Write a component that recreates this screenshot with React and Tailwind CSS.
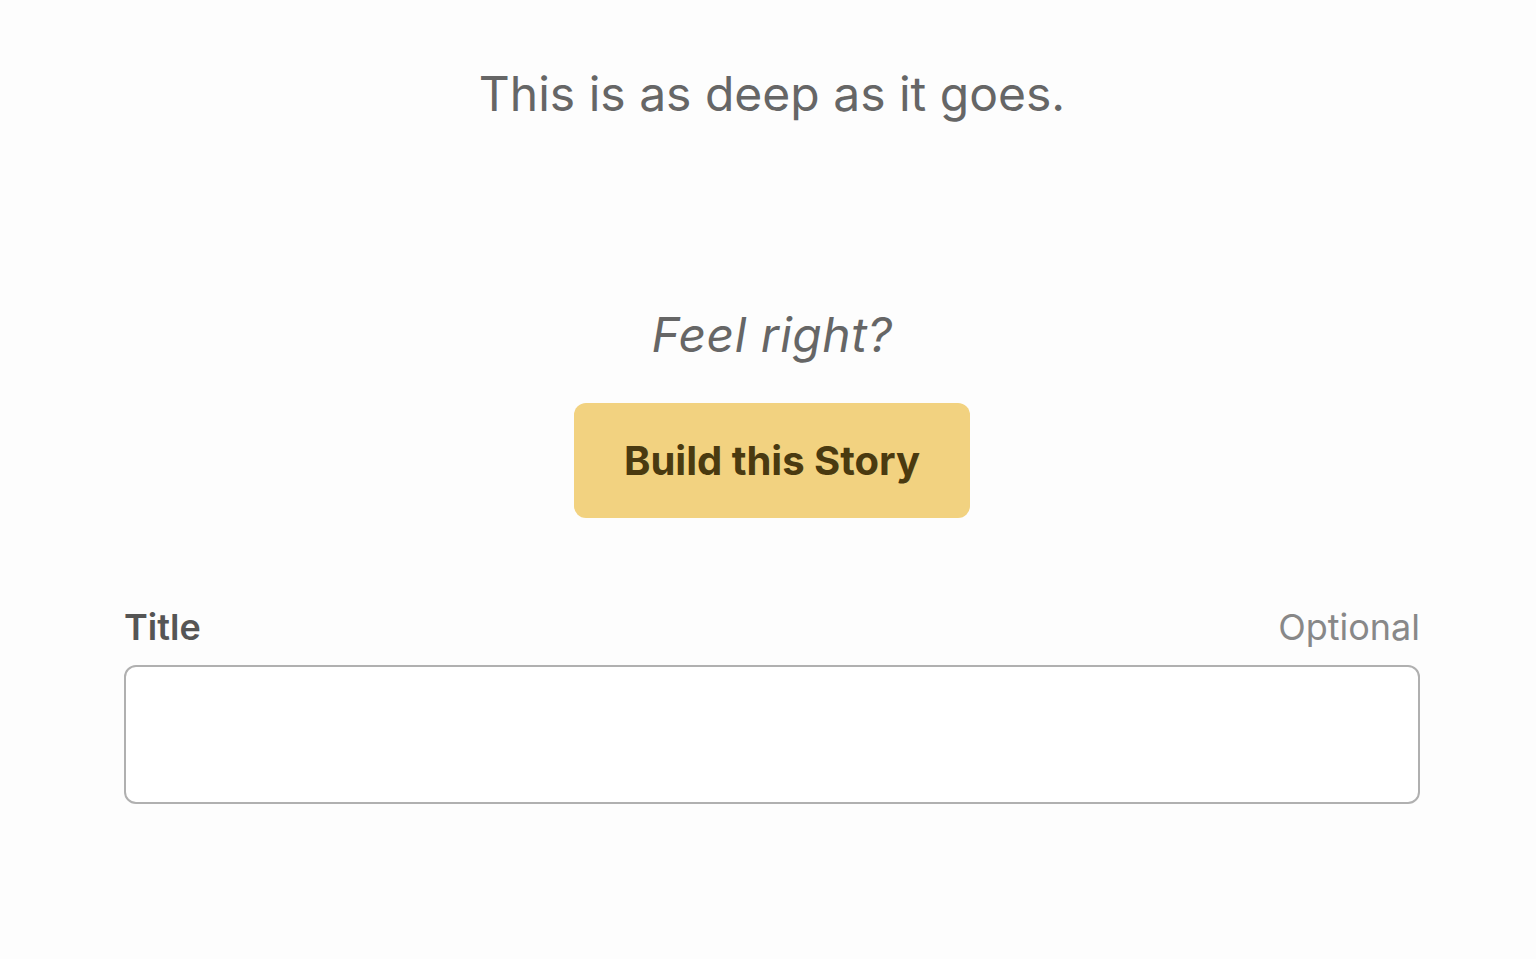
export default function App() {
  return (
    <div className="min-h-screen bg-[#fdfdfd] font-['Inter',sans-serif]">
      <div className="flex flex-col items-center pl-[124px] pr-[116px] pt-[62px]">
        <h1 className="text-[48px] leading-[64px] text-[#666666] font-normal">
          This is as deep as it goes.
        </h1>
        <p className="mt-[181px] text-[48px] leading-[56px] italic tracking-[0.5px] text-[#666666]">
          Feel right?
        </p>
        <button className="mt-[40px] h-[115px] w-[396px] rounded-[12px] bg-[#f2d280] text-[40px] font-bold text-[#4a3a10]">
          Build this Story
        </button>
        <div className="mt-[82px] flex w-full items-end justify-between">
          <span className="text-[36px] font-semibold text-[#555555]">Title</span>
          <span className="text-[36px] text-[#888888]">Optional</span>
        </div>
        <input className="mt-[11px] h-[139px] w-full rounded-[12px] border-2 border-[#b0b0b0] bg-white" />
      </div>
    </div>
  );
}
